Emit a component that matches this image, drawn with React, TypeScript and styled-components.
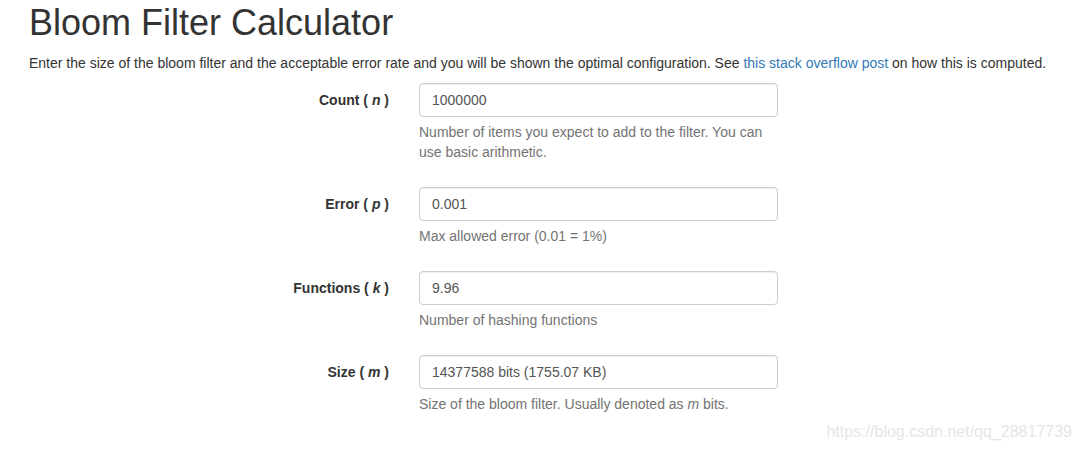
import React from 'react';
import styled, {createGlobalStyle} from 'styled-components';

const GlobalStyle = createGlobalStyle`
  body {
    margin: 0;
    background: #fff;
    color: #333;
    font-family: "Liberation Sans", Arial, sans-serif;
    font-size: 14px;
    line-height: 20px;
  }
`

const Page = styled.div`
  position: relative;
  width: 1080px;
  height: 450px;
  padding: 3px 0 0 29px;
  box-sizing: border-box;
  overflow: hidden;
`

const Title = styled.h1`
  margin: 0 0 10px;
  font-size: 36px;
  font-weight: 400;
  line-height: 1.1;
  color: #333;
`

const Intro = styled.p`
  margin: 0 0 10px;
`

const Link = styled.a`
  color: #337ab7;
  text-decoration: none;
`

const FormGroup = styled.div`
  display: grid;
  grid-template-columns: 360px 359px;
  column-gap: 30px;
  margin-bottom: 15px;
`

const Label = styled.label`
  padding-top: 7px;
  text-align: right;
  font-weight: 700;
`

const Field = styled.div`
  display: flex;
  flex-direction: column;
`

const Input = styled.input`
  height: 34px;
  box-sizing: border-box;
  padding: 6px 12px;
  border: 1px solid #ccc;
  border-radius: 4px;
  box-shadow: inset 0 1px 1px rgba(0, 0, 0, .075);
  font-family: inherit;
  font-size: 14px;
  color: #555;
  outline: none;
`

const Help = styled.span`
  display: block;
  margin: 5px 0 10px;
  color: #737373;
`

const Watermark = styled.div`
  position: absolute;
  right: 8px;
  bottom: 8px;
  font-size: 16px;
  color: #e6e6e6;
`

interface RowProps {
    name: string
    symbol: string
    value: string
    help: React.ReactNode
}

const Row = ({name, symbol, value, help}: RowProps) => (
    <FormGroup>
        <Label>{name} ( <i>{symbol}</i> )</Label>
        <Field>
            <Input defaultValue={value}/>
            <Help>{help}</Help>
        </Field>
    </FormGroup>
)

const App = () => {
    return (
        <Page>
            <GlobalStyle/>
            <Title>Bloom Filter Calculator</Title>
            <Intro>
                Enter the size of the bloom filter and the acceptable error rate and you will be shown the optimal
                configuration. See <Link href="#">this stack overflow post</Link> on how this is computed.
            </Intro>
            <Row name="Count" symbol="n" value="1000000"
                 help="Number of items you expect to add to the filter. You can use basic arithmetic."/>
            <Row name="Error" symbol="p" value="0.001" help="Max allowed error (0.01 = 1%)"/>
            <Row name="Functions" symbol="k" value="9.96" help="Number of hashing functions"/>
            <Row name="Size" symbol="m" value="14377588 bits (1755.07 KB)"
                 help={<>Size of the bloom filter. Usually denoted as <i>m</i> bits.</>}/>
            <Watermark>https://blog.csdn.net/qq_28817739</Watermark>
        </Page>
    )
}

export default App
